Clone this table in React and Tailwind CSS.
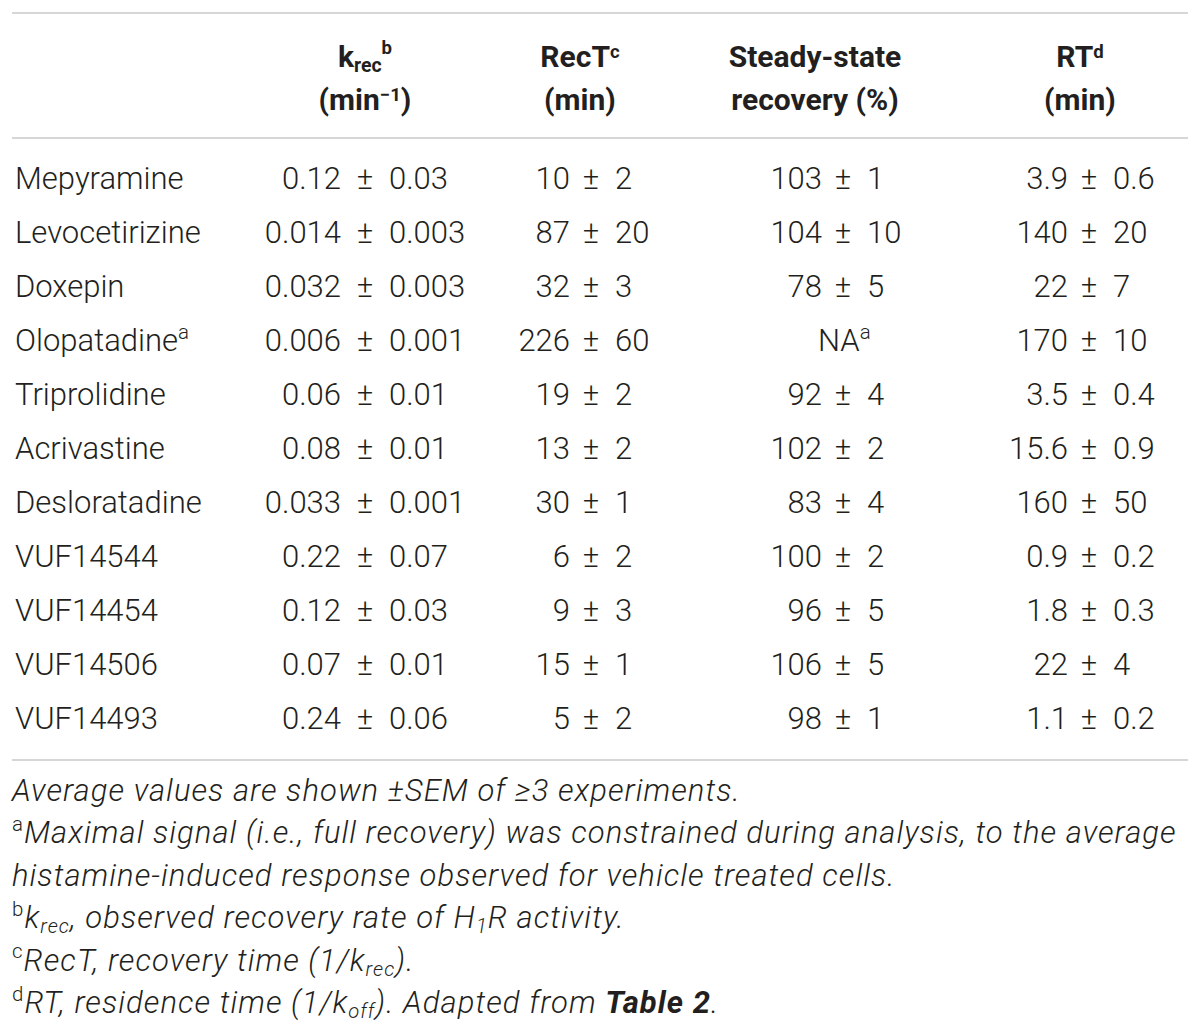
import React from "react";

const rows = [
  ["Mepyramine", ["0.12", "0.03"], ["10", "2"], ["103", "1"], ["3.9", "0.6"]],
  ["Levocetirizine", ["0.014", "0.003"], ["87", "20"], ["104", "10"], ["140", "20"]],
  ["Doxepin", ["0.032", "0.003"], ["32", "3"], ["78", "5"], ["22", "7"]],
  ["Olopatadine", ["0.006", "0.001"], ["226", "60"], null, ["170", "10"]],
  ["Triprolidine", ["0.06", "0.01"], ["19", "2"], ["92", "4"], ["3.5", "0.4"]],
  ["Acrivastine", ["0.08", "0.01"], ["13", "2"], ["102", "2"], ["15.6", "0.9"]],
  ["Desloratadine", ["0.033", "0.001"], ["30", "1"], ["83", "4"], ["160", "50"]],
  ["VUF14544", ["0.22", "0.07"], ["6", "2"], ["100", "2"], ["0.9", "0.2"]],
  ["VUF14454", ["0.12", "0.03"], ["9", "3"], ["96", "5"], ["1.8", "0.3"]],
  ["VUF14506", ["0.07", "0.01"], ["15", "1"], ["106", "5"], ["22", "4"]],
  ["VUF14493", ["0.24", "0.06"], ["5", "2"], ["98", "1"], ["1.1", "0.2"]],
];

const cols =
  "grid grid-cols-[238px_230px_90px_42px_68px_142px_42px_86px_118px_42px_78px]";

function Pm({ v }) {
  return (
    <>
      <div className="text-right">{v[0]}</div>
      <div className="text-center">±</div>
      <div className="text-left pl-[3px]">{v[1]}</div>
    </>
  );
}

function Sup({ children }) {
  return <sup className="text-[0.66em] not-italic font-light -top-[0.6em]">{children}</sup>;
}

function Sub({ children }) {
  return <sub className="text-[0.65em]">{children}</sub>;
}

export default function App() {
  return (
    <div
      className="w-[1200px] bg-white px-[12px] pt-[12px] text-[#231f20]"
      style={{ fontFamily: "Roboto, 'Liberation Sans', Arial, sans-serif" }}
    >
      <div className="border-t-2 border-[#d6d6d6]" />

      {/* header */}
      <div className={`${cols} pt-[21px] pb-[16px] text-[30px] leading-[43px] font-bold`}>
        <div />
        <div className="text-center">
          <div>
            k<sub className="text-[0.65em] font-bold">rec</sub>
            <sup className="text-[0.62em] font-bold -top-[0.7em]">b</sup>
          </div>
          <div>
            (min<sup className="text-[0.62em] font-bold">−1</sup>)
          </div>
        </div>
        <div className="col-span-3 text-center">
          <div>
            RecT<sup className="text-[0.62em] font-bold">c</sup>
          </div>
          <div>(min)</div>
        </div>
        <div className="col-span-3 text-center">
          <div>Steady-state</div>
          <div>recovery (%)</div>
        </div>
        <div className="col-span-3 text-center pl-[22px]">
          <div>
            RT<sup className="text-[0.62em] font-bold">d</sup>
          </div>
          <div>(min)</div>
        </div>
      </div>

      <div className="border-t-2 border-[#d6d6d6]" />

      {/* body */}
      <div className="py-[13px] text-[31px] leading-[54px] font-light">
        {rows.map((r, i) => (
          <div key={i} className={cols}>
            <div className="pl-[3px] whitespace-nowrap">
              {r[0]}
              {r[0] === "Olopatadine" && <Sup>a</Sup>}
            </div>
            <div className="flex justify-center whitespace-nowrap">
              <span>{r[1][0]}</span>
              <span className="w-[48px] text-center">±</span>
              <span>{r[1][1]}</span>
            </div>
            <Pm v={r[2]} />
            {r[3] ? (
              <Pm v={r[3]} />
            ) : (
              <div className="col-span-3 pl-[138px]">
                NA<Sup>a</Sup>
              </div>
            )}
            <Pm v={r[4]} />
          </div>
        ))}
      </div>

      <div className="border-t-2 border-[#d6d6d6]" />

      {/* footnotes */}
      <div className="pt-[9px] text-[31px] leading-[42.4px] italic font-light tracking-[0.034em] whitespace-nowrap">
        <p>Average values are shown ±SEM of ≥3 experiments.</p>
        <p>
          <Sup>a</Sup>Maximal signal (i.e., full recovery) was constrained during analysis, to the average
          <br />
          histamine-induced response observed for vehicle treated cells.
        </p>
        <p>
          <Sup>b</Sup>k<Sub>rec</Sub>, observed recovery rate of H<Sub>1</Sub>R activity.
        </p>
        <p>
          <Sup>c</Sup>RecT, recovery time (1/k<Sub>rec</Sub>).
        </p>
        <p>
          <Sup>d</Sup>RT, residence time (1/k<Sub>off</Sub>). Adapted from{" "}
          <span className="font-bold">Table 2</span>.
        </p>
      </div>
    </div>
  );
}
